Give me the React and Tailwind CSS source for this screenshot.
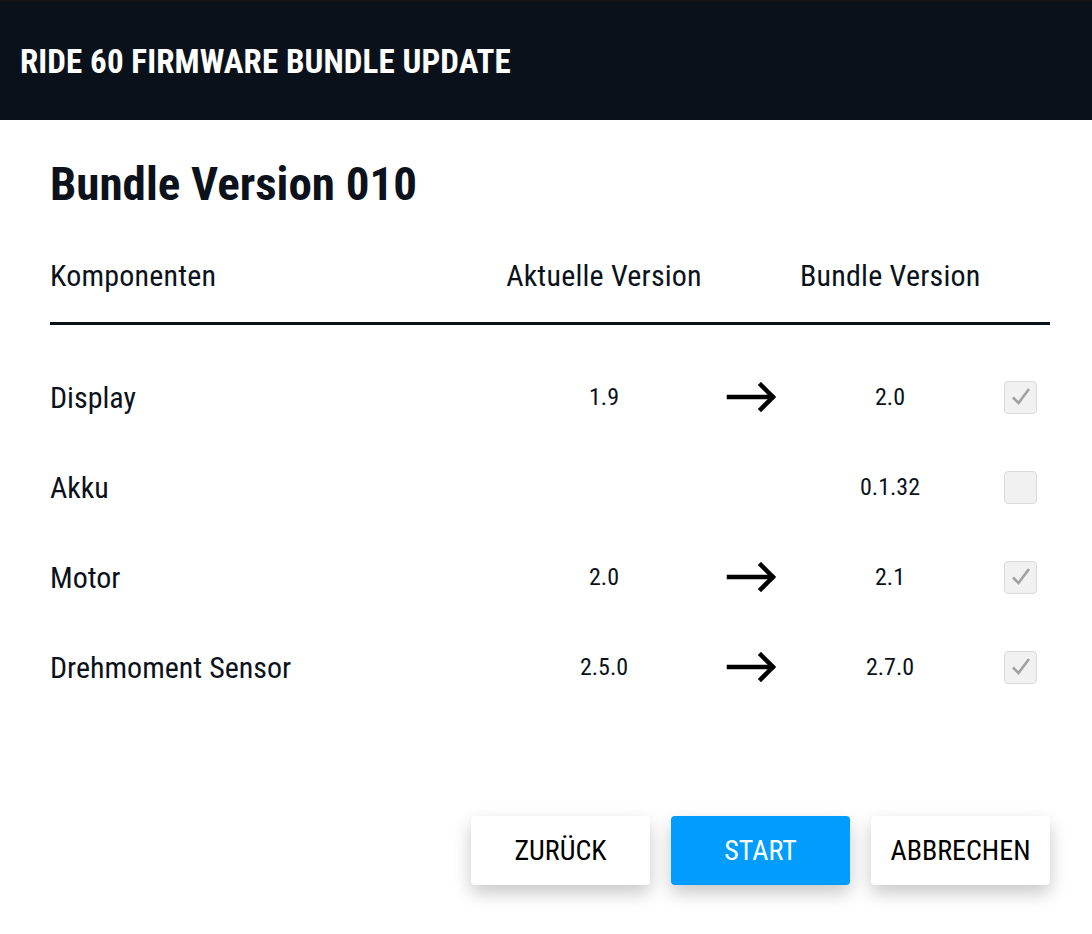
const rows = [
  { name: "Display", current: "1.9", bundle: "2.0", checked: true },
  { name: "Akku", current: "", bundle: "0.1.32", checked: false },
  { name: "Motor", current: "2.0", bundle: "2.1", checked: true },
  { name: "Drehmoment Sensor", current: "2.5.0", bundle: "2.7.0", checked: true },
];

const font = { fontFamily: '"Roboto Condensed", Roboto, "Liberation Sans", sans-serif' };

const Arrow = () => (
  <svg width="52" height="30" viewBox="0 0 52 30" fill="none" stroke="#000" strokeWidth="4.5" strokeLinecap="square">
    <path d="M3 15H46" />
    <path d="M35 3L47 15L35 27" strokeLinejoin="miter" />
  </svg>
);

const Check = ({ checked }) => (
  <div className="w-[33px] h-[33px] rounded-[4px] border border-[#dadada] bg-[#f1f1f1] flex items-center justify-center">
    {checked && (
      <svg width="24" height="24" viewBox="0 0 24 24" fill="none" stroke="#a0a0a0" strokeWidth="2.6">
        <path d="M4 12.5L9.5 18L20 4" />
      </svg>
    )}
  </div>
);

export default function App() {
  return (
    <div className="w-[1092px] h-[934px] bg-white text-[#0b121b]" style={font}>
      <div className="h-[120px] bg-[#0a111b] border-t-2 border-[#141414] flex items-center px-[20px]">
        <h1 className="text-white text-[33px] font-bold tracking-[0.1px] leading-none">RIDE 60 FIRMWARE BUNDLE UPDATE</h1>
      </div>

      <div className="ml-[50px] w-[1000px]">
        <h2 className="text-[47px] font-bold leading-none pt-[40px]">Bundle Version 010</h2>

        <div className="grid grid-cols-[454px_200px_96px_180px_70px] items-center mt-[46px] h-[36px] text-[30px]">
          <span className="tracking-[0.2px]">Komponenten</span>
          <span className="text-center whitespace-nowrap tracking-[0.2px]">Aktuelle Version</span>
          <span></span>
          <span className="text-center whitespace-nowrap tracking-[0.2px]">Bundle Version</span>
          <span></span>
        </div>
        <div className="h-[3px] bg-[#0a111b] mt-[33px]"></div>

        <div className="mt-[27px]">
          {rows.map((row) => (
            <div key={row.name} className="grid grid-cols-[454px_200px_96px_180px_70px] items-center h-[90px]">
              <span className="text-[30px]">{row.name}</span>
              <span className="text-center text-[24px]">{row.current}</span>
              <span className="flex justify-center">{row.current && <Arrow />}</span>
              <span className="text-center text-[24px]">{row.bundle}</span>
              <span className="flex justify-end pr-[13px]"><Check checked={row.checked} /></span>
            </div>
          ))}
        </div>

        <div className="flex justify-end gap-[21px] mt-[104px]">
          <button className="w-[179px] h-[69px] bg-white rounded-[4px] shadow-[0_8px_18px_rgba(0,0,0,0.22)] text-[28px] text-black uppercase">Zurück</button>
          <button className="w-[179px] h-[69px] bg-[#009dff] rounded-[4px] shadow-[0_8px_18px_rgba(0,0,0,0.22)] text-[28px] text-white uppercase">Start</button>
          <button className="w-[179px] h-[69px] bg-white rounded-[4px] shadow-[0_8px_18px_rgba(0,0,0,0.22)] text-[28px] text-black uppercase">Abbrechen</button>
        </div>
      </div>
    </div>
  );
}
